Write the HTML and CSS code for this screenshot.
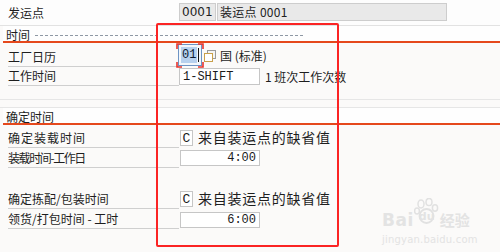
FILE: index.html
```
<!DOCTYPE html>
<html>
<head>
<meta charset="utf-8">
<link rel="stylesheet" href="styles.css">
</head>
<body>
<div class="page">
  <div class="row r-top">
    <div class="lbl plain">发运点</div>
    <div class="val">
      <span class="ro ro-code">0001</span>
      <span class="ro ro-name">装运点 0001</span>
    </div>
  </div>

  <div class="sec sec1">
    <span class="sec-title">时间</span>
    <span class="dash"></span>
  </div>

  <div class="row r-cal">
    <div class="lbl">工厂日历</div>
    <div class="val">
      <span class="focus-wrap">
        <span class="fld fld-focus"><span class="sel">01</span><span class="caret"></span></span>
        <svg class="corners" width="28" height="25" viewBox="0 0 28 25">
          <path d="M1 6V1H6M22 1H27V6M27 19V24H22M6 24H1V19" fill="none" stroke="#e8342c" stroke-width="1.6"/>
        </svg>
      </span>
      <svg class="help" width="14" height="14" viewBox="0 0 14 14">
        <rect x="4.5" y="1.5" width="8" height="8" fill="#f4f4f4" stroke="#9a9a9a"/>
        <rect x="1.5" y="4.5" width="8" height="8" fill="#ffffff" stroke="#c9a04a"/>
      </svg>
      <span class="txt">国 (标准)</span>
    </div>
  </div>

  <div class="row r-shift">
    <div class="lbl">工作时间</div>
    <div class="val">
      <span class="fld fld-shift">1-SHIFT</span>
      <span class="txt txt-shift">1 班次工作次数</span>
    </div>
  </div>

  <div class="gap gap1"></div>
  <div class="gap gap2"></div>

  <div class="sec sec2">
    <span class="sec-title">确定时间</span>
  </div>

  <div class="row r-load1">
    <div class="lbl sp1">确定装载时间</div>
    <div class="val">
      <span class="fld fld-c">C</span>
      <span class="txt txt-big">来自装运点的缺省值</span>
    </div>
  </div>

  <div class="row r-load2">
    <div class="lbl sq">装载时间-工作日</div>
    <div class="val">
      <span class="fld fld-time">4:00</span>
    </div>
  </div>

  <div class="gap gap3"></div>

  <div class="row r-pick1">
    <div class="lbl">确定拣配/包装时间</div>
    <div class="val">
      <span class="fld fld-c">C</span>
      <span class="txt txt-big">来自装运点的缺省值</span>
    </div>
  </div>

  <div class="row r-pick2">
    <div class="lbl">领货/打包时间 - 工时</div>
    <div class="val">
      <span class="fld fld-time">6:00</span>
    </div>
  </div>

  <div class="annot"></div>

  <div class="watermark">
    <div class="wm-top">
      <span class="wm-bai">Bai</span>
      <span class="wm-paw">
        <svg width="26" height="26" viewBox="0 0 26 26">
          <ellipse cx="7" cy="6" rx="3" ry="4" fill="none" stroke="#e1e1e1" stroke-width="1.5"/>
          <ellipse cx="15" cy="4" rx="3" ry="3.6" fill="none" stroke="#e1e1e1" stroke-width="1.5"/>
          <ellipse cx="21" cy="10" rx="2.6" ry="3.2" fill="none" stroke="#e1e1e1" stroke-width="1.5"/>
          <ellipse cx="3" cy="13" rx="2.4" ry="3" fill="none" stroke="#e1e1e1" stroke-width="1.5"/>
          <circle cx="12.5" cy="18" r="7" fill="none" stroke="#e1e1e1" stroke-width="1.8"/>
        </svg>
        <span class="wm-du">du</span>
      </span>
      <span class="wm-jy">经验</span>
    </div>
    <div class="wm-url">jingyan.baidu.com</div>
  </div>
</div>
</body>
</html>
```

FILE: styles.css
```
html, body {
  margin: 0;
  padding: 0;
}
body {
  background: #fbfaf9;
  font-family: "Noto Sans CJK SC", "Noto Sans", sans-serif;
  font-size: 12px;
  color: #1e1e1e;
}
.page {
  position: relative;
  width: 500px;
  height: 252px;
  overflow: hidden;
}
.row {
  display: flex;
  box-sizing: border-box;
}
.lbl {
  margin-left: 8px;
  width: 171px;
  flex: none;
  box-sizing: border-box;
  display: flex;
  align-items: flex-end;
  padding-bottom: 1px;
  border-bottom: 1px solid #cfcfcf;
  line-height: 16px;
  white-space: nowrap;
}
.lbl.plain {
  border-bottom: none;
  align-items: center;
  padding-bottom: 0;
}
.lbl.sp1 { letter-spacing: 1px; }
.lbl.sq { letter-spacing: -1.4px; }
.val {
  display: flex;
  align-items: center;
  white-space: nowrap;
}

/* top row */
.r-top {
  height: 26px;
  border-bottom: 1px solid #e2e2e2;
  background: #fdfdfd;
  align-items: center;
}
.r-top .val { padding-bottom: 1px; }
.ro {
  box-sizing: border-box;
  height: 18px;
  background: #e9e9e9;
  border: 1px solid #cdcdcd;
  font-family: "DejaVu Sans", "Noto Sans CJK SC", sans-serif;
  font-size: 12px;
  line-height: 16px;
  padding-left: 2px;
  color: #222;
}
.ro-code { width: 37px; }
.ro-name { width: 230px; margin-left: 1px; font-family: "Noto Sans CJK SC", sans-serif; }
.ro-name { letter-spacing: 0.3px; }

/* section headers */
.sec {
  display: flex;
  align-items: center;
  margin-left: 3px;
  height: 17px;
  box-sizing: border-box;
  border-bottom: 2px solid #e5481c;
  background: #fefefe;
}
.sec-title {
  margin-left: 3px;
  line-height: 15px;
  padding-top: 2px;
}
.dash {
  width: 268px;
  margin-left: 5px;
  margin-top: 3px;
  border-top: 1px dashed #8e98a4;
}

/* fields */
.fld {
  box-sizing: border-box;
  background: #ffffff;
  border: 1px solid #c6c6c6;
  font-family: "Liberation Mono", monospace;
  font-size: 12px;
  color: #1a1a1a;
  display: flex;
  align-items: center;
}

.r-cal { height: 24px; }
.r-cal .val { margin-left: -1px; }
.focus-wrap {
  position: relative;
  display: inline-flex;
}
.fld-focus {
  width: 24px;
  height: 22px;
  border: 1px solid #6d94c4;
  padding-left: 2px;
  background: #f3f7fb;
}
.sel {
  background: #b7d1ee;
  color: #0c1a30;
  height: 16px;
  line-height: 16px;
  padding: 0 1px;
}
.caret {
  width: 1px;
  height: 14px;
  background: #111;
  margin-left: 1px;
}
.corners {
  position: absolute;
  left: -2px;
  top: -1px;
}
.help { margin-left: 1px; margin-top: 1px; }
.txt { margin-left: 3px; }

.r-shift { height: 19px; }
.fld-shift {
  width: 81px;
  height: 17px;
  padding-left: 3px;
}
.txt-shift { margin-left: 5px; }

.gap1 {
  height: 14px;
  box-sizing: border-box;
  border-bottom: 1px solid #e6e6e6;
}
.gap2 {
  height: 8px;
  box-sizing: border-box;
  border-bottom: 1px solid #e6e6e6;
}
.gap3 { height: 21px; }

.r-load1 { height: 23px; }
.r-load2, .r-pick1, .r-pick2 { height: 20px; }
.r-load1 .val, .r-load2 .val, .r-pick1 .val { align-items: flex-end; padding-bottom: 2px; }
.r-pick2 .val { align-items: flex-end; padding-bottom: 1px; }

.val .fld-c, .val .fld-time { margin-left: 1px; }
.fld-c {
  width: 13px;
  height: 16px;
  justify-content: center;
  font-size: 13px;
}
.txt-big {
  font-size: 14px;
  letter-spacing: 0.75px;
  margin-left: 5px;
  line-height: 18px;
}
.fld-time {
  width: 80px;
  height: 16px;
  justify-content: flex-end;
  padding-right: 3px;
}

/* annotation overlay */
.annot {
  position: absolute;
  left: 156px;
  top: 23px;
  width: 183px;
  height: 224px;
  box-sizing: border-box;
  border: 2.5px solid #fb2424;
  border-radius: 2px;
}

/* watermark */
.watermark {
  position: absolute;
  left: 382px;
  top: 194px;
  width: 92px;
  color: #e3e3e3;
  font-family: "DejaVu Sans", sans-serif;
}
.wm-top {
  display: flex;
  align-items: flex-end;
  height: 36px;
}
.wm-bai {
  font-size: 17px;
  font-weight: bold;
  line-height: 20px;
  letter-spacing: 0.5px;
}
.wm-paw {
  position: relative;
  width: 26px;
  height: 36px;
  display: inline-block;
}
.wm-paw svg {
  position: absolute;
  left: 0;
  top: 4px;
}
.wm-du {
  position: absolute;
  left: 5px;
  top: 16px;
  font-size: 11px;
  font-weight: bold;
  color: #e3e3e3;
}
.wm-jy {
  font-family: "Noto Sans CJK SC", sans-serif;
  font-size: 15px;
  font-weight: bold;
  line-height: 20px;
}
.wm-url {
  font-size: 10px;
  margin-top: 4px;
  letter-spacing: 0.2px;
}
```
